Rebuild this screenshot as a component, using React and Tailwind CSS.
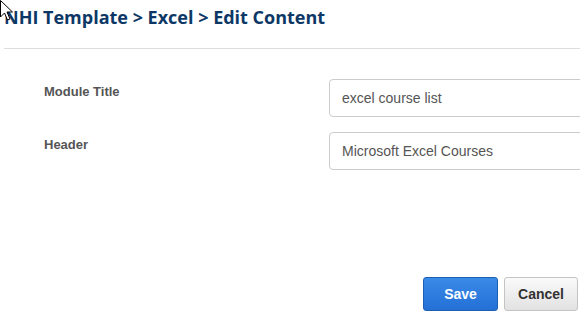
import React, { useState } from 'react';

function Cursor() {
  return (
    <svg className="absolute left-0 top-0 pointer-events-none" width="14" height="22" viewBox="0 0 14 22">
      <path d="M0.5 0.5 L0.5 17 L4.5 13 L7.5 20 L10 19 L7 12 L12.5 12 Z" fill="#fff" stroke="#000" strokeWidth="1" strokeLinejoin="round" />
    </svg>
  );
}

function Field({ label, value, onChange }) {
  return (
    <div className="flex items-start">
      <label className="w-[329px] shrink-0 pl-[44px] pt-[3px] text-[13px] font-bold text-[#555]">{label}</label>
      <input
        className="h-[38px] w-[270px] shrink-0 rounded-[4px] border border-[#ccc] bg-white px-[12px] text-[14px] text-[#555] outline-none"
        value={value}
        onChange={e => onChange(e.target.value)}
      />
    </div>
  );
}

export default function App() {
  const [title, setTitle] = useState('excel course list');
  const [header, setHeader] = useState('Microsoft Excel Courses');

  return (
    <div className="relative h-[327px] w-[580px] overflow-hidden bg-white font-['Liberation_Sans',Arial,sans-serif]">
      <Cursor />
      <h1 className="pl-[4px] pt-[5px] font-['Open_Sans',sans-serif] text-[18px] font-bold leading-[24px] text-[#0d3866]">
        NHI Template &gt; Excel &gt; Edit Content
      </h1>
      <div className="ml-[4px] mt-[19px] border-t border-[#ddd]" />

      <div className="mt-[30px] flex flex-col gap-[15px]">
        <Field label="Module Title" value={title} onChange={setTitle} />
        <Field label="Header" value={header} onChange={setHeader} />
      </div>

      <div className="mt-[107px] flex justify-end gap-[6px] pr-[2px]">
        <button className="h-[34px] w-[75px] rounded-[3px] border border-[#1c5fb0] bg-gradient-to-b from-[#3a8ae8] to-[#2470d6] text-[14px] font-bold text-white">
          Save
        </button>
        <button className="h-[34px] w-[74px] rounded-[3px] border border-[#c4c4c4] bg-gradient-to-b from-[#fafafa] to-[#e2e2e2] text-[14px] font-bold text-[#333]">
          Cancel
        </button>
      </div>
    </div>
  );
}
